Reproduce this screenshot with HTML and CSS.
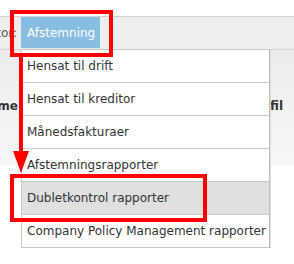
FILE: index.html
```html
<!DOCTYPE html>
<html>
<head>
<meta charset="utf-8">
<link rel="stylesheet" href="styles.css">
</head>
<body>
<div class="page">
  <div class="toolbar">
    <div class="label"><span>Kreditor:</span></div>
    <div class="tab">Afstemning</div>
  </div>
  <div class="thead">
    <div class="th-left"><span>Name</span></div>
    <div class="th-right">Profil</div>
  </div>
  <ul class="menu">
    <li class="item">Hensat til drift</li>
    <li class="item">Hensat til kreditor</li>
    <li class="item">Månedsfakturaer</li>
    <li class="item">Afstemningsrapporter</li>
    <li class="item active">Dubletkontrol rapporter</li>
    <li class="item">Company Policy Management rapporter</li>
  </ul>
  <div class="mark mark-tab"></div>
  <div class="mark mark-item"></div>
  <svg class="arrow" width="30" height="180" viewBox="0 0 30 180">
    <rect x="19" y="57" width="4" height="100" fill="#ff0000"/>
    <polygon points="13,151 29,151 21,173" fill="#ff0000"/>
  </svg>
</div>
</body>
</html>
```
FILE: styles.css
```css
* { box-sizing: border-box; }
html, body { margin: 0; padding: 0; background: #fff; }
body {
  font-family: "DejaVu Sans", Verdana, sans-serif;
  font-size: 12px;
  color: #333;
  width: 294px;
  height: 264px;
  overflow: hidden;
}
.page { position: relative; width: 294px; height: 264px; padding-top: 16px; }
.toolbar {
  height: 34px;
  background: #eeeeee;
  border-top: 1px solid #d2d2d2;
  border-bottom: 1px solid #d2d2d2;
  display: flex;
  align-items: stretch;
}
.label {
  width: 21px;
  overflow: hidden;
  display: flex;
  justify-content: flex-end;
  align-items: center;
  white-space: nowrap;
  color: #555;
  padding-right: 4px;
}
.tab {
  width: 79px;
  background: #88bde2;
  color: #fff;
  display: flex;
  align-items: center;
  padding-left: 6px;
  margin-bottom: 1px;
}
.thead {
  height: 116px;
  background: linear-gradient(#ececec, #f7f7f7);
  display: flex;
  justify-content: space-between;
  align-items: center;
  font-weight: bold;
  color: #333;
}
.th-left {
  width: 18px;
  overflow: hidden;
  display: flex;
  justify-content: flex-end;
  white-space: nowrap;
  margin-top: -4px;
}
.th-right {
  white-space: nowrap;
  margin-top: -4px;
  margin-right: 11px;
}
.menu {
  position: absolute;
  left: 21px;
  top: 49px;
  width: 249px;
  margin: 0;
  padding: 0;
  list-style: none;
  background: #fff;
  border: 1px solid #c8c8c8;
  border-right-color: #bdbdbd;
  box-shadow: 1px 0 0 #dedede;
}
.item {
  height: 33px;
  padding-left: 5px;
  display: flex;
  align-items: center;
  border-top: 1px solid #c8c8c8;
  white-space: nowrap;
}
.item:first-child { border-top: none; height: 32px; }
.item.active { background: #e0e0e0; }
.mark {
  position: absolute;
  border: 4px solid #ff0000;
}
.mark-tab { left: 10px; top: 10px; width: 103px; height: 47px; }
.mark-item { left: 10px; top: 174px; width: 197px; height: 48px; }
.arrow { position: absolute; left: 0; top: 0; }
```
